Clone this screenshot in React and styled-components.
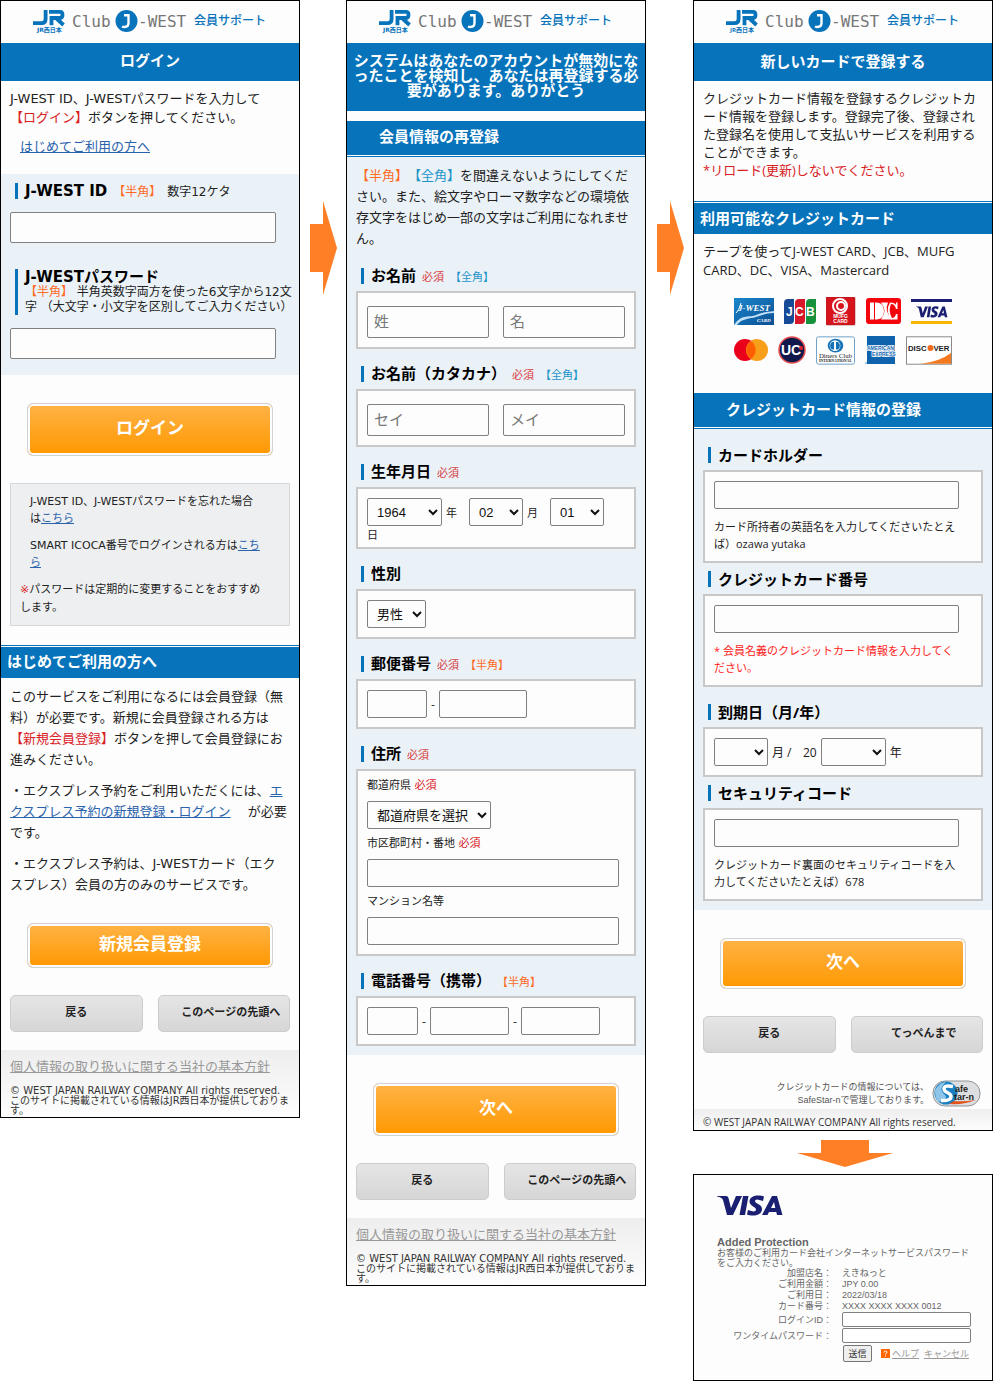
import React from "react";
import styled, { createGlobalStyle } from "styled-components";

const BLUE = "#0673bb";

const GlobalStyle = createGlobalStyle`
  * { box-sizing: border-box; }
  body {
    margin: 0;
    background: #fff;
    color: #222;
    text-spacing-trim: space-all;
  }
  p, h1, h2, h3, ul { margin: 0; padding: 0; }
  button, input, select { font-family: inherit; margin: 0; }
`;

const Board = styled.main`
  display: grid;
  grid-template-columns: minmax(0, 1fr) 46px minmax(0, 1fr) 47px minmax(0, 1fr);
  align-items: start;
`;

const Column = styled.div`
  display: flex;
  flex-direction: column;
`;

const Screen = styled.section`
  border: 1px solid #000;
  background: #fdfdfd;
  overflow: hidden;
  font-size: 13px;
  font-family: ${(p) =>
    p.$ui
      ? '"Open Sans", "Noto Sans CJK JP", sans-serif'
      : '"DejaVu Sans", "Noto Sans CJK JP", sans-serif'};
`;

const ArrowSlot = styled.div`
  display: flex;
  justify-content: center;
  padding-top: ${(p) => (p.$down ? "9px" : "201px")};
  padding-bottom: ${(p) => (p.$down ? "7px" : "0")};
  padding-left: ${(p) => (p.$down ? "4px" : "0")};

  svg { display: block; }
`;

const Header = styled.header`
  display: flex;
  justify-content: center;
  align-items: center;
  height: 42px;

  svg { display: block; }
`;

const Title = styled.h1`
  padding: 11px 4px 12px;
  background: ${BLUE};
  color: #fff;
  font-size: 15px;
  line-height: 15px;
  text-align: center;
`;

const Band = styled.h2`
  padding: ${(p) => (p.$indent ? "9px 32px" : "7px 6px 8px")};
  margin-top: ${(p) => p.$gap || 0}px;
  border-${(p) => (p.$indent ? "bottom" : "top")}: 3px double ${BLUE};
  background: ${BLUE};
  background-clip: padding-box;
  color: #fff;
  font-size: 15px;
  line-height: 15px;
`;

const Copy = styled.div`
  display: flex;
  flex-direction: column;
  gap: 10px;
  padding: 8px 0 0 9px;
  line-height: ${(p) => p.$line || 21}px;
  white-space: nowrap;
  color: #222;
`;

const FirstLink = styled.p`
  padding-left: 10px;
`;

const Link = styled.a`
  color: ${(p) => (p.$gray ? "#999" : "#2a62ac")};
  text-decoration: underline;
`;

const Red = styled.span`
  color: #d8201f;
`;

const Tint = styled.div`
  margin-top: ${(p) => p.$gap || 0}px;
  padding: ${(p) => p.$top || 0}px 9px ${(p) => p.$bottom || 9}px;
  background: #eaf1f7;
  display: flow-root;

  ${Copy} { padding-left: 0; }
`;

const Heading = styled.h3`
  margin: ${(p) => (p.$close ? 8 : 17)}px 0 7px 5px;
  padding-left: 7px;
  border-left: 3px solid ${BLUE};
  color: #000;
  font-size: 15px;
  line-height: 16px;
  white-space: nowrap;

  ${Copy} + & { margin-top: 19px; }
`;

const LoginHeading = styled(Heading)`
  margin: 0 0 13px 5px;
`;

const Tag = styled.span`
  margin-left: ${(p) => (p.$flush ? 0 : 6)}px;
  color: ${(p) => p.$color || "#222"};
  font-size: ${(p) => p.$size || 11}px;
  font-weight: 400;
  line-height: 10px;
`;

const Hint = styled.p`
  font-size: 12px;
  font-weight: 400;
  line-height: 15px;
  color: #222;
`;

const Box = styled.div`
  padding: ${(p) => p.$pad || "9px"};
  border: 2px solid #c8c8c8;
  background: #fdfdfd;
  color: #222;
  font-size: ${(p) => (p.$ui ? 12 : 11)}px;
`;

const Row = styled.div`
  display: flex;
  flex-wrap: wrap;
  align-items: center;
  gap: 0 ${(p) => p.$gap || 4}px;
`;

const NameRow = styled.div`
  display: grid;
  grid-template-columns: 1fr 1fr;
  gap: 14px;
`;

const Field = styled.input`
  display: block;
  width: ${(p) => p.$w || "100%"};
  height: ${(p) => p.$h || 28}px;
  padding: 0 6px;
  border: 1px solid #808080;
  border-radius: 2px;
  background: #fdfdfd;
  font-size: 15px;

  &::placeholder { color: #777; }
`;

const LoginField = styled(Field)`
  width: 266px;
  height: 31px;
  margin-bottom: ${(p) => p.$gap || 0}px;
`;

const Select = styled.select`
  width: ${(p) => p.$w}px;
  height: 28px;
  padding: 0 5px;
  border: 1px solid #808080;
  border-radius: 2px;
  background: #fdfdfd;
  color: #111;
  font-family: "Liberation Sans", "Noto Sans CJK JP", sans-serif;
  font-size: 13px;
`;

const Unit = styled.span`
  min-width: ${(p) => p.$w || 0}px;
`;

const DayUnit = styled.span`
  flex-basis: 100%;
  line-height: 20px;
`;

const SmallLabel = styled.label`
  display: block;
  line-height: 30px;
`;

const Note = styled.p`
  margin-top: 9px;
  font-size: 11px;
  line-height: 17px;
  white-space: nowrap;
  color: ${(p) => (p.$alert ? "#ff2020" : "#222")};
`;

const MainButton = styled.button`
  display: block;
  width: 246px;
  height: ${(p) => p.$h || 53}px;
  margin: ${(p) => p.$gap || 28}px auto 0;
  padding: 0 0 6px;
  border: 1px solid #d2d2d2;
  border-radius: 6px;
  box-shadow: inset 0 0 0 2px #fdfdfd;
  background: linear-gradient(#ffb347, #ff9800);
  color: #fff;
  font-size: 17px;
  font-weight: 700;
`;

const SubButtons = styled.div`
  display: grid;
  grid-template-columns: 1fr 1fr;
  gap: 15px;
  padding: 27px 9px 18px;
`;

const SubButton = styled.button`
  height: 37px;
  padding: 0 0 5px ${(p) => (p.$shift ? 14 : 0)}px;
  border: 1px solid #ccc;
  border-radius: 5px;
  background: linear-gradient(#e5e5e5, #d6d6d6);
  color: #222;
  font-size: 11px;
  font-weight: 700;
  white-space: nowrap;
`;

const HelpBox = styled.div`
  display: flex;
  flex-direction: column;
  gap: 10px;
  margin: 27px 9px 0;
  padding: 9px 9px 8px;
  border: 1px solid #d5d8db;
  background: #eeeff1;
  font-size: 11px;
  line-height: 17px;
  white-space: nowrap;
`;

const HelpItem = styled.p`
  padding-left: 10px;
`;

const HelpNote = styled.p`
  line-height: 18px;
`;

const Footer = styled.footer`
  padding: 7px 0 1px 9px;
  background: linear-gradient(#eee, #fdfdfd);
  line-height: 20px;
  white-space: nowrap;
`;

const Rights = styled.p`
  margin-top: ${(p) => (p.$flush ? 0 : 9)}px;
  font-size: 10px;
  line-height: ${(p) => (p.$flush ? 13 : 10)}px;
  color: #333;
`;

const Brands = styled.div`
  display: flex;
  flex-direction: column;
  gap: 11px;
  padding: 17px 0 29px 40px;
`;

const BrandRow = styled.div`
  display: flex;
  align-items: center;
  gap: 10px;
  height: 28px;

  svg { display: block; flex: none; }
`;

const Safe = styled.div`
  display: flex;
  justify-content: flex-end;
  align-items: center;
  gap: 3px;
  padding: 9px 11px 2px;
  color: #555;
  font-family: "Liberation Sans", "Noto Sans CJK JP", sans-serif;
  font-size: 9px;
  line-height: 13px;
  text-align: right;

  svg { display: block; }
`;

const Verify = styled(Screen)`
  padding: 20px 20px 18px 23px;
  color: #666;
  font-family: "Liberation Sans", "Noto Sans CJK JP", sans-serif;
  font-size: 9px;
  line-height: 10px;
  white-space: nowrap;
`;

const VerifyTitle = styled.h2`
  margin-top: 18px;
  font-size: 11px;
  line-height: 12px;
`;

const Details = styled.div`
  display: grid;
  grid-template-columns: 115px 129px;
  column-gap: 10px;
  line-height: 11px;
`;

const Key = styled.label`
  text-align: right;
  line-height: ${(p) => (p.$field ? 16 : 11)}px;
`;

const PassField = styled.input`
  width: 100%;
  height: 15px;
  border: 1px solid #808080;
  border-radius: 2px;
  background: #fff;
`;

const VerifyActions = styled.div`
  display: flex;
  align-items: center;
  gap: 5px;
  padding-top: 1px;
  margin-left: 126px;

  svg { margin: 0 -3px 0 4px; }
`;

const SendButton = styled.button`
  width: 29px;
  height: 17px;
  padding: 0;
  border: 1px solid #777;
  border-radius: 2px;
  background: #efefef;
  color: #333;
  font-size: 9px;
`;

const ORANGE = "#ff6a1f";
const CYAN = "#1c94c8";

const Logo = () => (
  <Header>
    <svg width="236" height="28" viewBox="0 0 236 28" role="img" aria-label="JR西日本 Club J-WEST 会員サポート">
      <g fill="none" stroke={BLUE} strokeWidth="3.800">
        <path d="M13.600 2V11Q13.600 15.200 9.500 15.200H1" />
        <path d="M17 3.800H28Q30.500 3.800 30.500 6.800T28 10H19.500V17.200" />
        <path d="M23.500 9.500L31.500 17" />
      </g>
      <text x="5" y="24" fontSize="6" fontWeight="700" fill={BLUE}>JR西日本</text>
      <g fill="#777" fontFamily="'DejaVu Sans Mono', monospace" fontSize="16">
        <text x="40" y="19">Club</text>
        <text x="106" y="19">-WEST</text>
      </g>
      <circle cx="94.500" cy="13" r="11" fill={BLUE} />
      <path d="M92 7.200H96.500V15q0 4-4 4-1.500 0-2.500-.500" fill="none" stroke="#fdfdfd" strokeWidth="2.400" />
      <text x="162" y="17" fontSize="12" fontWeight="500" fontFamily="'Noto Sans CJK JP', sans-serif" fill={BLUE}>
        会員サポート
      </text>
    </svg>
  </Header>
);

const RightArrow = () => (
  <ArrowSlot>
    <svg width="28" height="94" viewBox="0 0 28 94" aria-hidden="true">
      <path d="M1 23H14V0L28 47L14 94V71H1Z" fill="#ff7f27" />
    </svg>
  </ArrowSlot>
);

const DownArrow = () => (
  <ArrowSlot $down>
    <svg width="96" height="27" viewBox="0 0 96 27" aria-hidden="true">
      <path d="M24 0H72V13H96L48 27L0 13H24Z" fill="#ff7f27" />
    </svg>
  </ArrowSlot>
);

const VISA_SHAPE =
  "M0 1H9Q11 1 11.500 3L14 13L19 1H25L16 20H10L6 5Q5 2 0 1.500ZM26 1H31.500L28 20H22.500ZM47 1.500L46 6Q38 3 38 6C38 9 45 9 45 14C45 21 35 21.500 30 19.500L31 15Q39 18 39 14.500C39 12 32.500 11 32.500 6.500C32.500 0 42 -.500 47 1.500ZM55 1H60L65.500 20H60L59.300 17H52L50.500 20H45ZM57 7L54 13H58.300Z";

const VisaMark = ({ width, height }) => (
  <svg width={width} height={height} viewBox="0 0 66 21" role="img" aria-label="VISA">
    <path fill="#1a1f71" d={VISA_SHAPE} />
  </svg>
);

const CardBrands = () => (
  <Brands>
    <BrandRow>
      <svg width="40" height="27" viewBox="0 0 40 27" role="img" aria-label="J-WEST CARD">
        <defs>
          <linearGradient id="jwest" x1="0" y1="0" x2="1" y2="1">
            <stop offset="0" stopColor="#1a86cc" />
            <stop offset="1" stopColor="#0c4f94" />
          </linearGradient>
        </defs>
        <rect width="40" height="27" fill="url(#jwest)" />
        <path d="M0 27C8 15 16 20 22 17S34 14 40 13V15C33 15 28 17 22 19S8 20 3 27Z" fill="#bfe0f5" />
        <path d="M7 5Q5 13 2 15" stroke="#fff" fill="none" />
        <text x="4" y="13" fontSize="9" fill="#fff" fontStyle="italic" fontWeight="700" fontFamily="'Liberation Serif', serif">J-WEST</text>
        <text x="23" y="24" fontSize="5" fill="#fff" fontStyle="italic" fontWeight="700" fontFamily="'Liberation Serif', serif">CARD</text>
      </svg>
      <svg width="32" height="25" viewBox="0 0 32 25" role="img" aria-label="JCB">
        <path d="M4 0H10V21Q10 25 6 25H0V4Q0 0 4 0Z" fill="#174a96" />
        <path d="M15 0H21V21Q21 25 17 25H11V4Q11 0 15 0Z" fill="#d7182a" />
        <path d="M26 0H32V21Q32 25 28 25H22V4Q22 0 26 0Z" fill="#16923d" />
        <g fontSize="12" fontWeight="700" fill="#fff" fontFamily="'Liberation Sans', sans-serif">
          <text x="2" y="17">J</text>
          <text x="11" y="17">C</text>
          <text x="22" y="17">B</text>
        </g>
      </svg>
      <svg width="30" height="29" viewBox="0 0 30 29" role="img" aria-label="MUFG CARD">
        <rect width="29" height="28" rx="1" fill="#d7131c" stroke="#8c2020" strokeWidth=".500" />
        <circle cx="14" cy="9" r="7" fill="none" stroke="#fff" strokeWidth="2" />
        <circle cx="15" cy="9" r="4" fill="none" stroke="#fff" strokeWidth="2" />
        <g fontSize="5" fontWeight="700" fill="#fff" textAnchor="middle" fontFamily="'Liberation Sans', sans-serif">
          <text x="14.500" y="21">MUFG</text>
          <text x="14.500" y="26">CARD</text>
        </g>
      </svg>
      <svg width="35" height="26" viewBox="0 0 35 26" role="img" aria-label="DC">
        <rect width="35" height="26" rx="3" fill="#f4050c" />
        <path d="M4 4.500H8V21.500H4ZM9 4.500H11Q18 5 18 13T11 21.500H9Z" fill="#fff" />
        <path d="M15 4.500H22Q18 13 26 21.500H15Q22 13 15 4.500Z" fill="#fff" />
        <path d="M24 4.500Q29 4.500 30 7V4.500H31.500V11H30Q29 6 25 6Q22 13 26 20Q29 20 30 16H31.500V21.500H25Q19 13 24 4.500Z" fill="#fff" />
      </svg>
      <svg width="41" height="25" viewBox="0 0 41 25" role="img" aria-label="VISA">
        <rect width="41" height="3" fill="#1a1f71" />
        <rect y="22" width="41" height="3" fill="#f7b600" />
        <g transform="translate(5 7) scale(.480 .560)">
          <path fill="#1a1f71" d={VISA_SHAPE} />
        </g>
      </svg>
    </BrandRow>
    <BrandRow>
      <svg width="34" height="22" viewBox="0 0 34 22" role="img" aria-label="Mastercard">
        <circle cx="11" cy="11" r="11" fill="#eb001b" />
        <circle cx="23" cy="11" r="11" fill="#f79e1b" />
        <path d="M17 2A11 11 0 0 1 17 20A11 11 0 0 1 17 2Z" fill="#ff5f00" />
      </svg>
      <svg width="28" height="28" viewBox="0 0 28 28" role="img" aria-label="UC">
        <circle cx="14" cy="14" r="13" fill="#10184c" stroke="#e8504f" strokeWidth="1.500" />
        <text x="13" y="19" textAnchor="middle" fontSize="14" fontWeight="700" fill="#fff" fontFamily="'Liberation Sans', sans-serif">UC</text>
        <circle cx="23" cy="12" r="2" fill="#e0242a" />
      </svg>
      <svg width="39" height="29" viewBox="0 0 40 29" role="img" aria-label="Diners Club International">
        <rect x=".500" y=".500" width="39" height="28" rx="2" fill="#fff" stroke="#6c9fc9" />
        <ellipse cx="20" cy="9.500" rx="8" ry="7" fill="#1672b8" />
        <circle cx="19.500" cy="9.500" r="5.500" fill="#fff" />
        <path d="M18.500 5.500A4 4 0 0 0 18.500 13.500ZM20.500 5.500A4 4 0 0 1 20.500 13.500Z" fill="#1672b8" />
        <g textAnchor="middle" fill="#222" fontFamily="'Liberation Serif', serif">
          <text x="20" y="22" fontSize="7">Diners Club</text>
          <text x="20" y="26.500" fontSize="4" fontWeight="700">INTERNATIONAL</text>
        </g>
      </svg>
      <svg width="31" height="28" viewBox="0 0 31 28" role="img" aria-label="American Express">
        <rect x="2" width="28" height="28" fill="#0f63ad" />
        <g fontSize="5" fontWeight="700" fill="#0f63ad" stroke="#fff" strokeWidth="1.500" paintOrder="stroke" fontFamily="'Liberation Sans', sans-serif">
          <text x="2" y="14">AMERICAN</text>
          <text x="7" y="20">EXPRESS</text>
        </g>
        <circle cx="1" cy="27" r=".700" fill="#0f63ad" />
      </svg>
      <svg width="46" height="29" viewBox="0 0 47 29" role="img" aria-label="DISCOVER">
        <rect x=".500" y=".500" width="46" height="28" fill="#fff" stroke="#888" />
        <path d="M46 17Q34 26 15 28H46Z" fill="#f47a20" />
        <g fontSize="8" fontWeight="700" fill="#222" fontFamily="'Liberation Sans', sans-serif">
          <text x="2" y="15">DISC</text>
          <text x="28" y="15">VER</text>
        </g>
        <circle cx="25" cy="12" r="3" fill="#f26a1c" />
      </svg>
    </BrandRow>
  </Brands>
);

const SafeBadge = () => (
  <svg width="49" height="27" viewBox="0 0 49 27" role="img" aria-label="SafeStar-n">
    <rect x="1" y="1" width="47" height="25" rx="12" fill="#dcdedf" stroke="#8f9496" />
    <circle cx="14" cy="13" r="11.500" fill="#1a80c2" />
    <path d="M3 10Q8 2 14 2Q6 9 12 14T6 22Q3 18 3 10Z" fill="#8cc5e8" />
    <path d="M21 6.500Q12 4.500 12 9C12 13 19 12 19 16.500Q19 21 9 20.500" fill="none" stroke="#fff" strokeWidth="3.500" />
    <path d="M17 24Q32 25 44 20Q32 22 22 21Z" fill="#e2541c" />
    <g fontSize="9" fontWeight="700" fill="#222" fontFamily="'Liberation Sans', sans-serif">
      <text x="23" y="12">afe</text>
      <text x="22" y="20">tar-n</text>
    </g>
  </svg>
);

const PageFooter = () => (
  <Footer>
    <Link $gray href="#privacy">個人情報の取り扱いに関する当社の基本方針</Link>
    <Rights>
      © WEST JAPAN RAILWAY COMPANY All rights reserved.<br />
      このサイトに掲載されている情報はJR西日本が提供しておりま<br />
      す。
    </Rights>
  </Footer>
);

const Required = () => <Tag $color="#d84040">必須</Tag>;

function LoginScreen() {
  return (
    <Screen>
      <Logo />
      <Title>ログイン</Title>
      <Copy $line={19}>
        <p>
          J-WEST ID、J-WESTパスワードを入力して<br />
          <Red>【ログイン】</Red>ボタンを押してください。
        </p>
        <FirstLink><Link href="#first">はじめてご利用の方へ</Link></FirstLink>
      </Copy>
      <Tint $gap={18} $top={9} $bottom={16}>
        <LoginHeading>
          <label htmlFor="jwest-id">J-WEST ID</label>
          <Tag $size={12} $color={ORANGE}>【半角】</Tag>
          <Tag $size={12}>数字12ケタ</Tag>
        </LoginHeading>
        <LoginField id="jwest-id" $gap={26} />
        <LoginHeading>
          <label htmlFor="jwest-pass">J-WESTパスワード</label>
          <Hint>
            <Tag $flush $size={12} $color={ORANGE}>【半角】</Tag> 半角英数字両方を使った6文字から12文<br />
            字 （大文字・小文字を区別してご入力ください）
          </Hint>
        </LoginHeading>
        <LoginField id="jwest-pass" type="password" />
      </Tint>
      <MainButton type="button">ログイン</MainButton>
      <HelpBox>
        <HelpItem>
          J-WEST ID、J-WESTパスワードを忘れた場合<br />
          は<Link href="#forgot">こちら</Link>
        </HelpItem>
        <HelpItem>
          SMART ICOCA番号でログインされる方は<Link href="#icoca">こち<br />ら</Link>
        </HelpItem>
        <HelpNote>
          <Red>※</Red>パスワードは定期的に変更することをおすすめ<br />
          します。
        </HelpNote>
      </HelpBox>
      <Band $gap={19}>はじめてご利用の方へ</Band>
      <Copy>
        <p>
          このサービスをご利用になるには会員登録（無<br />
          料）が必要です。新規に会員登録される方は<br />
          <Red>【新規会員登録】</Red>ボタンを押して会員登録にお<br />
          進みください。
        </p>
        <p>
          ・エクスプレス予約をご利用いただくには、<Link href="#express">エ<br />
          クスプレス予約の新規登録・ログイン</Link>　 が必要<br />
          です。
        </p>
        <p>
          ・エクスプレス予約は、J-WESTカード（エク<br />
          スプレス）会員の方のみのサービスです。
        </p>
      </Copy>
      <MainButton type="button" $h={45}>新規会員登録</MainButton>
      <SubButtons>
        <SubButton type="button">戻る</SubButton>
        <SubButton type="button" $shift>このページの先頭へ</SubButton>
      </SubButtons>
      <PageFooter />
    </Screen>
  );
}

function MemberScreen() {
  return (
    <Screen>
      <Logo />
      <Title>
        システムはあなたのアカウントが無効にな<br />
        ったことを検知し、あなたは再登録する必<br />
        要があります。ありがとう
      </Title>
      <Band $indent $gap={10}>会員情報の再登録</Band>
      <Tint>
        <Copy>
          <p>
            <Tag $flush $size={13} $color={ORANGE}>【半角】</Tag>
            <Tag $flush $size={13} $color={CYAN}>【全角】</Tag>を間違えないようにしてくだ<br />
            さい。また、絵文字やローマ数字などの環境依<br />
            存文字をはじめ一部の文字はご利用になれませ<br />
            ん。
          </p>
        </Copy>
        <Heading>お名前<Required /><Tag $color={CYAN}>【全角】</Tag></Heading>
        <Box $pad="13px 9px 9px">
          <NameRow>
            <Field $h={32} placeholder="姓" aria-label="姓" />
            <Field $h={32} placeholder="名" aria-label="名" />
          </NameRow>
        </Box>
        <Heading>お名前（カタカナ）<Required /><Tag $color={CYAN}>【全角】</Tag></Heading>
        <Box $pad="13px 9px 9px">
          <NameRow>
            <Field $h={32} placeholder="セイ" aria-label="セイ" />
            <Field $h={32} placeholder="メイ" aria-label="メイ" />
          </NameRow>
        </Box>
        <Heading>生年月日<Required /></Heading>
        <Box $pad="9px 9px 1px">
          <Row>
            <Select $w={75} aria-label="年"><option>1964</option></Select>
            <Unit $w={19}>年</Unit>
            <Select $w={54} aria-label="月"><option>02</option></Select>
            <Unit $w={19}>月</Unit>
            <Select $w={54} aria-label="日"><option>01</option></Select>
            <DayUnit>日</DayUnit>
          </Row>
        </Box>
        <Heading><label htmlFor="gender">性別</label></Heading>
        <Box>
          <Row><Select $w={59} id="gender"><option>男性</option></Select></Row>
        </Box>
        <Heading>郵便番号<Required /><Tag $color={ORANGE}>【半角】</Tag></Heading>
        <Box>
          <Row>
            <Field $w="60px" aria-label="郵便番号 上3桁" />-
            <Field $w="88px" aria-label="郵便番号 下4桁" />
          </Row>
        </Box>
        <Heading>住所<Required /></Heading>
        <Box $pad="0 9px 9px">
          <SmallLabel htmlFor="pref">都道府県 <Red>必須</Red></SmallLabel>
          <Row><Select $w={124} id="pref"><option>都道府県を選択</option></Select></Row>
          <SmallLabel htmlFor="city">市区郡町村・番地 <Red>必須</Red></SmallLabel>
          <Field $w="252px" id="city" />
          <SmallLabel htmlFor="building">マンション名等</SmallLabel>
          <Field $w="252px" id="building" />
        </Box>
        <Heading>電話番号（携帯）<Tag $color={ORANGE}>【半角】</Tag></Heading>
        <Box>
          <Row>
            <Field $w="51px" aria-label="電話番号 1" />-
            <Field $w="79px" aria-label="電話番号 2" />-
            <Field $w="79px" aria-label="電話番号 3" />
          </Row>
        </Box>
      </Tint>
      <MainButton type="button">次へ</MainButton>
      <SubButtons>
        <SubButton type="button">戻る</SubButton>
        <SubButton type="button" $shift>このページの先頭へ</SubButton>
      </SubButtons>
      <PageFooter />
    </Screen>
  );
}

function CardScreen() {
  return (
    <Screen $ui>
      <Logo />
      <Title>新しいカードで登録する</Title>
      <Copy $line={18}>
        <p>
          クレジットカード情報を登録するクレジットカ<br />
          ード情報を登録します。登録完了後、登録され<br />
          た登録名を使用して支払いサービスを利用する<br />
          ことができます。<br />
          <Red>*リロード(更新)しないでください。</Red>
        </p>
      </Copy>
      <Band $gap={22}>利用可能なクレジットカード</Band>
      <Copy $line={19}>
        <p>
          テープを使ってJ-WEST CARD、JCB、MUFG<br />
          CARD、DC、VISA、Mastercard
        </p>
      </Copy>
      <CardBrands />
      <Band $indent>クレジットカード情報の登録</Band>
      <Tint $top={1}>
        <Heading><label htmlFor="holder">カードホルダー</label></Heading>
        <Box>
          <Field $w="245px" id="holder" />
          <Note>
            カード所持者の英語名を入力してくださいたとえ<br />
            ば）ozawa yutaka
          </Note>
        </Box>
        <Heading $close><label htmlFor="number">クレジットカード番号</label></Heading>
        <Box>
          <Field $w="245px" id="number" />
          <Note $alert>
            * 会員名義のクレジットカード情報を入力してく<br />
            ださい。
          </Note>
        </Box>
        <Heading>到期日（月/年）</Heading>
        <Box $ui>
          <Row>
            <Select $w={54} aria-label="月"><option></option></Select>
            <Unit $w={27}>月 /</Unit>
            <Unit>20</Unit>
            <Select $w={65} aria-label="年"><option></option></Select>
            <Unit>年</Unit>
          </Row>
        </Box>
        <Heading $close><label htmlFor="code">セキュリティコード</label></Heading>
        <Box>
          <Field $w="245px" id="code" />
          <Note>
            クレジットカード裏面のセキュリティコードを入<br />
            力してくださいたとえば）678
          </Note>
        </Box>
      </Tint>
      <MainButton type="button" $h={51}>次へ</MainButton>
      <SubButtons>
        <SubButton type="button">戻る</SubButton>
        <SubButton type="button" $shift>てっぺんまで</SubButton>
      </SubButtons>
      <Safe>
        <p>
          クレジットカードの情報については、<br />
          SafeStar-nで管理しております。
        </p>
        <SafeBadge />
      </Safe>
      <Footer>
        <Rights $flush>© WEST JAPAN RAILWAY COMPANY All rights reserved.</Rights>
      </Footer>
    </Screen>
  );
}

function VerifyScreen() {
  return (
    <Verify>
      <VisaMark width={66} height={21} />
      <VerifyTitle>Added Protection</VerifyTitle>
      <p>
        お客様のご利用カード会社インターネットサービスパスワード<br />
        をご入力ください。
      </p>
      <Details>
        <Key as="span">加盟店名：</Key><span>えきねっと</span>
        <Key as="span">ご利用金額：</Key><span>JPY 0.00</span>
        <Key as="span">ご利用日：</Key><span>2022/03/18</span>
        <Key as="span">カード番号：</Key><span>XXXX XXXX XXXX 0012</span>
        <Key $field htmlFor="login-id">ログインID：</Key><PassField id="login-id" />
        <Key $field htmlFor="otp">ワンタイムパスワード：</Key><PassField id="otp" type="password" />
      </Details>
      <VerifyActions>
        <SendButton type="button">送信</SendButton>
        <svg width="9" height="9" viewBox="0 0 9 9" aria-hidden="true">
          <rect width="9" height="9" fill="#f60" />
          <path d="M3 3.500Q3 2 4.500 2T6 3.300Q6 4.200 4.500 4.800V5.500M4.500 6.500V7.500" fill="none" stroke="#fff" />
        </svg>
        <Link $gray href="#help">ヘルプ</Link>
        <Link $gray href="#cancel">キャンセル</Link>
      </VerifyActions>
    </Verify>
  );
}

export default function App() {
  return (
    <>
      <GlobalStyle />
      <Board>
        <LoginScreen />
        <RightArrow />
        <MemberScreen />
        <RightArrow />
        <Column>
          <CardScreen />
          <DownArrow />
          <VerifyScreen />
        </Column>
      </Board>
    </>
  );
}
